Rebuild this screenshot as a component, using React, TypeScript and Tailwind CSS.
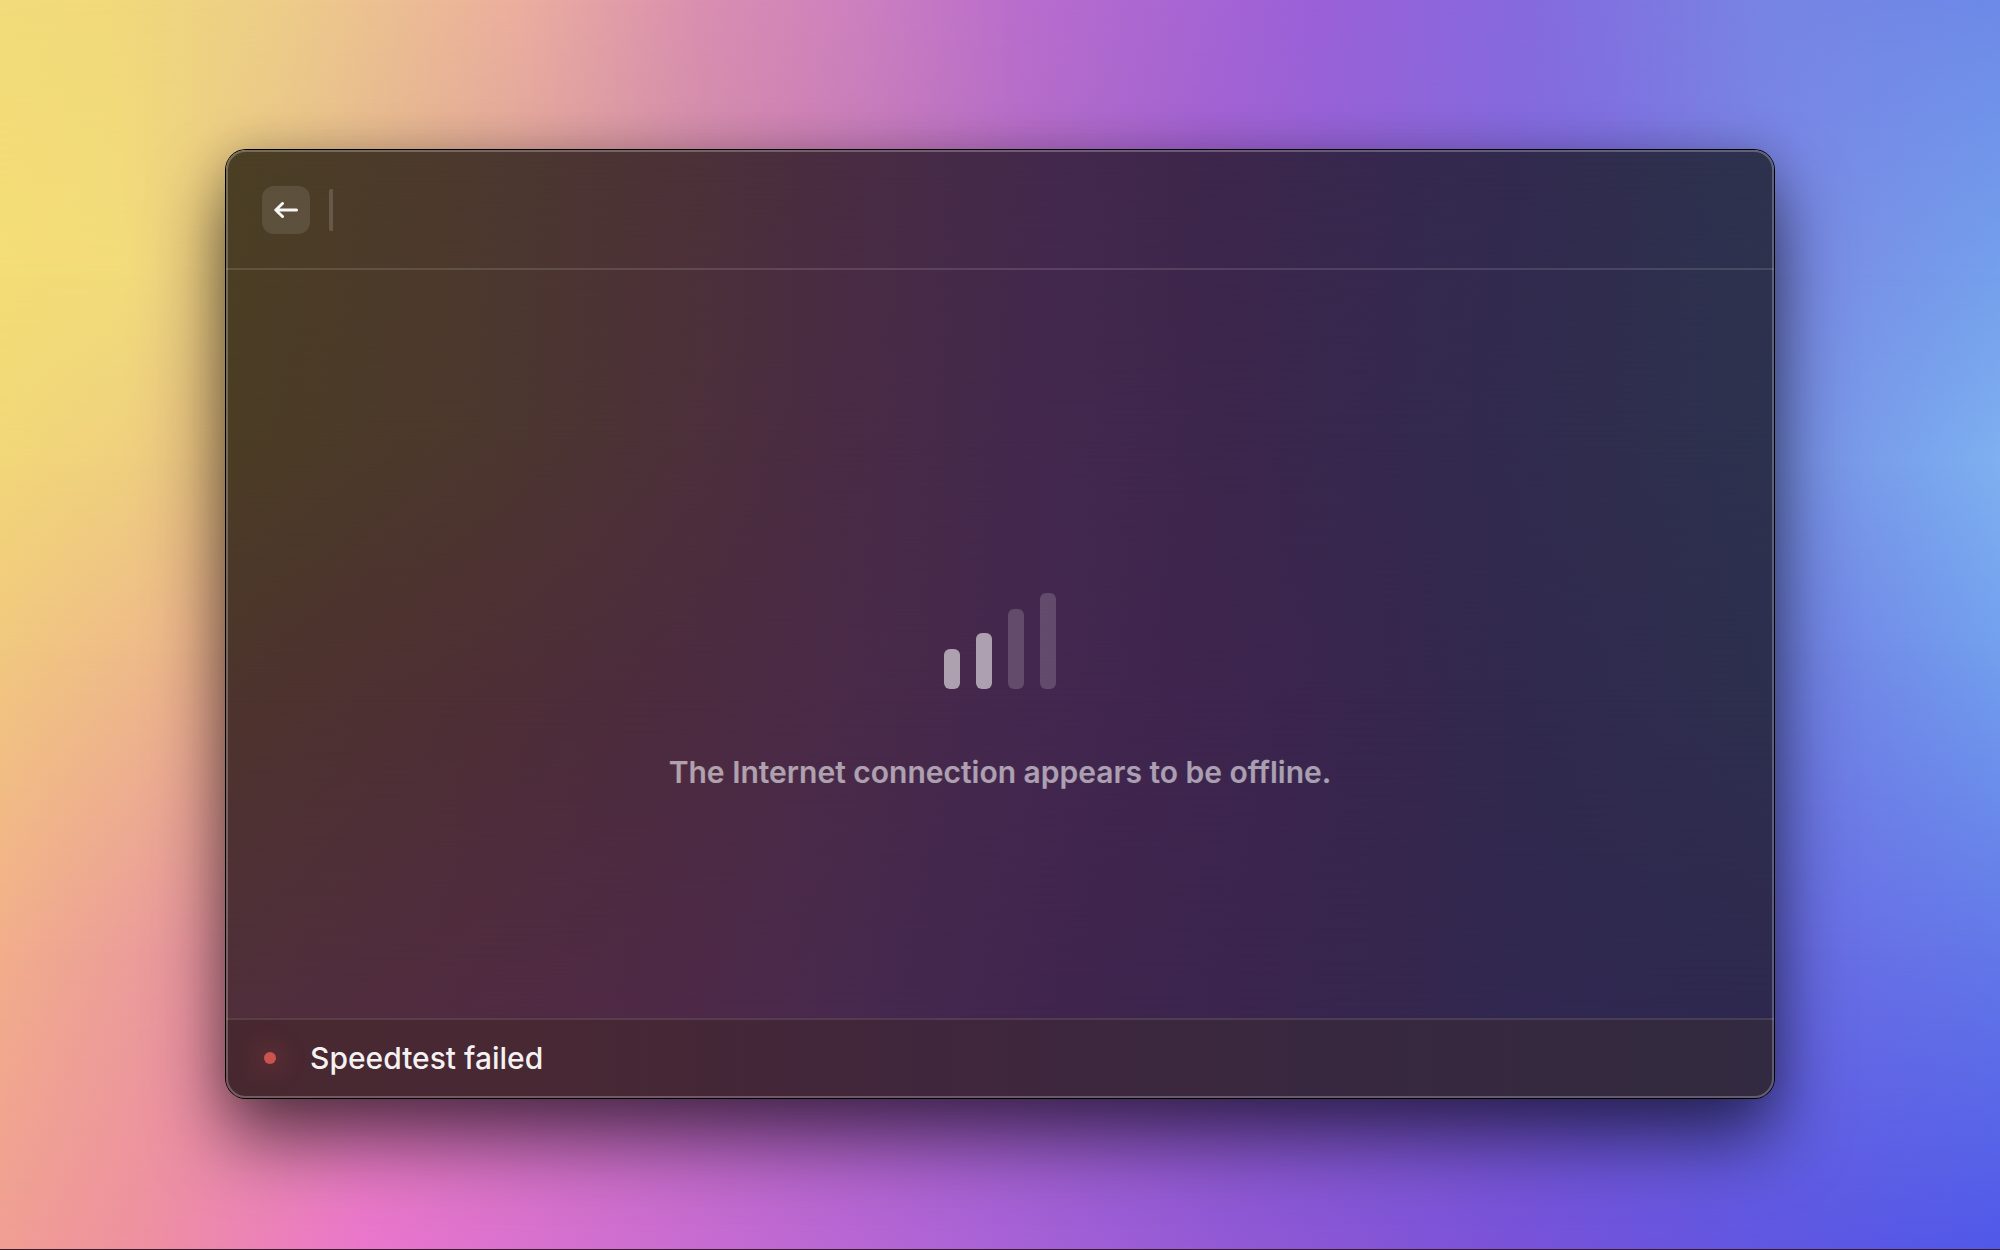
import React from "react";

function Wallpaper() {
  return (
    <div aria-hidden="true" className="absolute inset-0 -z-10">
      <div className="absolute inset-0 bg-[linear-gradient(90deg,#f2dc7a_0%,#f1da7a_5%,#edcd88_14%,#ecae9f_26%,#d98fb0_35%,#cd80bf_43%,#b96dcd_51%,#9a60d8_66%,#8669de_76%,#7884e4_88%,#6d8ae8_100%)]" />
      <div className="absolute inset-0 bg-[linear-gradient(90deg,#f3dd76_0%,#f2dc7a_6%,#e8c589_13%,#deac92_22%,#c97fb0_40%,#a060d0_60%,#7d6ee0_80%,#7990e6_92%,#74a0ec_100%)] [mask-image:linear-gradient(180deg,transparent_0%,black_22%)]" />
      <div className="absolute inset-0 bg-[linear-gradient(90deg,#f2d778_0%,#efd07e_6%,#dba28f_20%,#c070b0_40%,#9660d0_60%,#7470e0_80%,#7998e8_92%,#7aa8ee_97%,#7fb0f0_100%)] [mask-image:linear-gradient(180deg,transparent_22%,black_37%)]" />
      <div className="absolute inset-0 bg-[linear-gradient(90deg,#f1c87f_0%,#eeb98a_8%,#d88f9b_20%,#b468b8_40%,#8d5cd0_60%,#6e6ce0_80%,#7288e6_92%,#72a0ee_100%)] [mask-image:linear-gradient(180deg,transparent_37%,black_52%)]" />
      <div className="absolute inset-0 bg-[linear-gradient(90deg,#f2ae8b_0%,#ea9a9c_8%,#de80b0_20%,#b264c4_40%,#8b5ad2_60%,#6a5ee0_80%,#686fe5_92%,#6378e8_100%)] [mask-image:linear-gradient(180deg,transparent_52%,black_76%)]" />
      <div className="absolute inset-0 bg-[linear-gradient(90deg,#f09e93_0%,#ee90a0_7%,#ea76cc_18%,#cf6ed0_31%,#a862d6_50%,#9058d4_62%,#7852d8_76%,#6056e1_88%,#5058e8_100%)] [mask-image:linear-gradient(180deg,transparent_76%,black_100%)]" />
      <div className="absolute inset-x-0 bottom-0 h-px bg-[#3b1c2c]" />
    </div>
  );
}

function WindowTint() {
  return (
    <div aria-hidden="true" className="absolute inset-0 -z-10 overflow-hidden rounded-[20px]">
      <div className="absolute inset-0 bg-[linear-gradient(90deg,#4b3f24_0%,#4c392d_15%,#4c3138_30%,#492c42_40%,#43294c_53%,#3d264b_64%,#36284e_75%,#322a4e_83%,#2e304e_95%,#2d324e_100%)]" />
      <div className="absolute inset-0 bg-[linear-gradient(90deg,#4b3d24_0%,#4c372e_17%,#4c303a_30%,#492b45_40%,#43284e_53%,#3d264c_64%,#35284e_75%,#312b4e_83%,#2e304e_95%,#2c324e_100%)] [mask-image:linear-gradient(180deg,transparent_0%,black_30%)]" />
      <div className="absolute inset-0 bg-[linear-gradient(90deg,#4d342d_0%,#4e2e36_17%,#4c2b40_30%,#492a48_40%,#43274f_53%,#3e254e_64%,#37264e_75%,#31294e_83%,#2d2f4e_100%)] [mask-image:linear-gradient(180deg,transparent_30%,black_58%)]" />
      <div className="absolute inset-0 bg-[linear-gradient(90deg,#502e3b_0%,#502b42_17%,#4e2948_30%,#47294e_40%,#40254e_53%,#3b254e_64%,#36264e_75%,#312850_83%,#2e284f_100%)] [mask-image:linear-gradient(180deg,transparent_58%,black_92%)]" />
    </div>
  );
}

function BackButton() {
  return (
    <button
      type="button"
      aria-label="Back"
      className="flex size-12 items-center justify-center rounded-xl bg-white/10 text-white/95"
    >
      <svg width="24" height="16" viewBox="0 0 24 16" fill="none" stroke="currentColor" strokeWidth="3" strokeLinecap="round" strokeLinejoin="round">
        <path d="M22.5 8H2M8.5 1.5L1.8 8l6.7 6.5" />
      </svg>
    </button>
  );
}

function SignalIcon() {
  return (
    <svg width="112" height="96" viewBox="0 0 112 96" fill="white" aria-hidden="true">
      <rect x="0" y="56" width="16" height="40" rx="6" opacity="0.56" />
      <rect x="32" y="40" width="16" height="56" rx="6" opacity="0.56" />
      <rect x="64" y="16" width="16" height="80" rx="6" opacity="0.17" />
      <rect x="96" y="0" width="16" height="96" rx="6" opacity="0.17" />
    </svg>
  );
}

export default function App() {
  return (
    <div className="relative isolate flex min-h-screen flex-col overflow-hidden px-[226px] pt-[150px] pb-[152px] font-['Inter',sans-serif]">
      <Wallpaper />
      <main className="relative isolate flex flex-1 flex-col rounded-[20px] shadow-[0_0_0_1px_#000,0_40px_72px_rgba(0,0,0,0.6),0_0_40px_rgba(0,0,0,0.16)]">
        <WindowTint />
        <header className="flex h-30 items-center gap-[19px] border-b-2 border-white/12 px-9 pt-0.5">
          <BackButton />
          <input
            aria-label="Search"
            className="h-[42px] min-w-0 flex-1 rounded-xs border-l-4 border-white/15 bg-transparent px-3 text-3xl text-white outline-none"
          />
        </header>
        <section className="flex flex-1 flex-col items-center justify-center gap-[63px] pt-[97px]">
          <SignalIcon />
          <p className="text-[30px] leading-10 font-semibold text-white/56">
            The Internet connection appears to be offline.
          </p>
        </section>
        <footer className="flex h-20 items-center gap-[34px] rounded-b-[20px] border-t-2 border-white/10 bg-[linear-gradient(90deg,#482830_0%,#482833_20%,#40263c_45%,#38283f_70%,#322a40_100%)] pb-0.5 pl-[38px]">
          <span className="size-3 rounded-full bg-[#cb524e] shadow-[0_0_24px_8px_rgba(203,82,78,0.2)]" />
          <span className="text-[30px] leading-10 font-medium text-white/95">Speedtest failed</span>
        </footer>
        <div aria-hidden="true" className="pointer-events-none absolute inset-0 rounded-[20px] border-2 border-white/24" />
      </main>
    </div>
  );
}
